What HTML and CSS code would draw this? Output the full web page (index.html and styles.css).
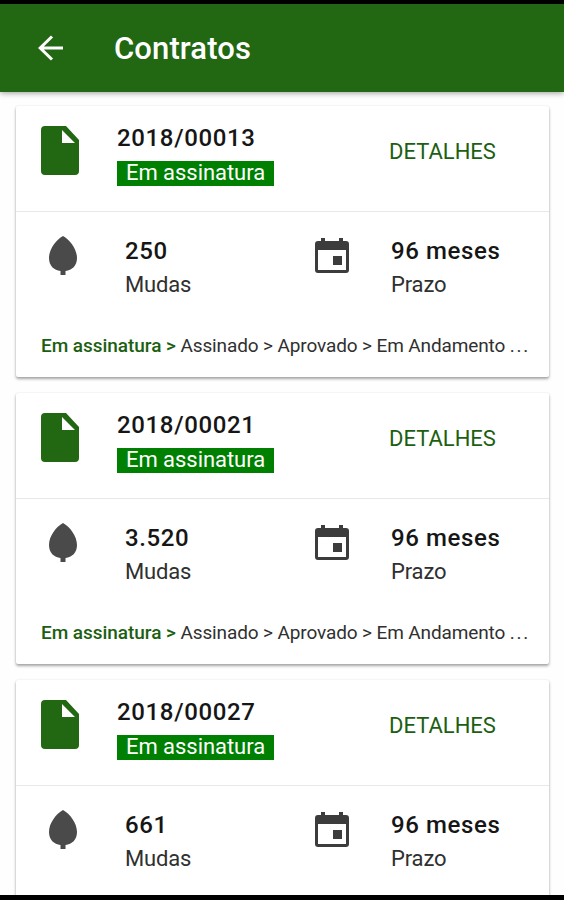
FILE: index.html
```html
<!DOCTYPE html>
<html lang="pt-BR">
<head>
    <meta charset="UTF-8">
    <meta name="viewport" content="width=device-width, initial-scale=1.0">
    <title>Contratos</title>
    <link rel="stylesheet" href="styles.css">
</head>
<body>
    <!-- Shared icons -->
    <svg class="icons">
        <symbol id="file" viewBox="0 0 38 49">
            <path d="M4 0H25L38 14V45Q38 49 34 49H4Q0 49 0 45V4Q0 0 4 0ZM21 4V17H34Z" fill-rule="evenodd"/>
        </symbol>
        <symbol id="leaf" viewBox="0 0 28 39">
            <path d="M14 0C7 4 0 13 0 22C0 30 5 34 11.5 35V39H16.5V35C23 34 28 30 28 22C28 13 21 4 14 0Z"/>
        </symbol>
        <symbol id="calendar" viewBox="0 0 34 35">
            <path d="M6 0H10V3H24V0H28V3H31Q34 3 34 6V32Q34 35 31 35H3Q0 35 0 32V6Q0 3 3 3H6ZM3 12V32H31V12ZM18 18H27V27H18Z" fill-rule="evenodd"/>
        </symbol>
    </svg>

    <header class="toolbar">
        <svg class="back" viewBox="0 0 26 26">
            <path d="M25 13H2M14 1.5L2.2 13L14 24.5"/>
        </svg>
        <h1>Contratos</h1>
    </header>

    <main class="list">
        <section class="card">
            <div class="card-head">
                <svg class="file"><use href="#file"/></svg>
                <div class="contract">
                    <h2>2018/00013</h2>
                    <span class="badge">Em assinatura</span>
                </div>
                <a class="details">DETALHES</a>
            </div>
            <div class="card-info">
                <svg class="leaf"><use href="#leaf"/></svg>
                <div class="value"><strong>250</strong><p>Mudas</p></div>
                <svg class="calendar"><use href="#calendar"/></svg>
                <div class="value"><strong>96 meses</strong><p>Prazo</p></div>
            </div>
            <p class="steps"><b>Em assinatura &gt;</b> Assinado &gt; Aprovado &gt; Em Andamento <span class="dots">...</span></p>
        </section>

        <section class="card">
            <div class="card-head">
                <svg class="file"><use href="#file"/></svg>
                <div class="contract">
                    <h2>2018/00021</h2>
                    <span class="badge">Em assinatura</span>
                </div>
                <a class="details">DETALHES</a>
            </div>
            <div class="card-info">
                <svg class="leaf"><use href="#leaf"/></svg>
                <div class="value"><strong>3.520</strong><p>Mudas</p></div>
                <svg class="calendar"><use href="#calendar"/></svg>
                <div class="value"><strong>96 meses</strong><p>Prazo</p></div>
            </div>
            <p class="steps"><b>Em assinatura &gt;</b> Assinado &gt; Aprovado &gt; Em Andamento <span class="dots">...</span></p>
        </section>

        <section class="card">
            <div class="card-head">
                <svg class="file"><use href="#file"/></svg>
                <div class="contract">
                    <h2>2018/00027</h2>
                    <span class="badge">Em assinatura</span>
                </div>
                <a class="details">DETALHES</a>
            </div>
            <div class="card-info">
                <svg class="leaf"><use href="#leaf"/></svg>
                <div class="value"><strong>661</strong><p>Mudas</p></div>
                <svg class="calendar"><use href="#calendar"/></svg>
                <div class="value"><strong>96 meses</strong><p>Prazo</p></div>
            </div>
        </section>
    </main>
</body>
</html>
```
FILE: styles.css
```css
* {
    box-sizing: border-box;
    margin: 0;
    padding: 0;
}
body {
    height: 900px;
    display: flex;
    flex-direction: column;
    overflow: hidden;
    border-top: 4px solid #000;
    border-bottom: 5px solid #000;
    background-color: #fefefe;
    color: #161616;
    font-family: Roboto, sans-serif;
}
.icons {
    display: none;
}
.toolbar {
    display: flex;
    flex: none;
    align-items: center;
    height: 88px;
    padding-left: 38px;
    background-color: #226711;
    box-shadow: 0 1px 6px rgba(0, 0, 0, 0.4);
    color: #fff;
}
.toolbar h1 {
    margin-left: 50px;
    padding-top: 1px;
    font-size: 31px;
    font-weight: 500;
    line-height: 36px;
    letter-spacing: 0.1px;
}
.back {
    width: 26px;
    height: 26px;
    fill: none;
    stroke: #fff;
    stroke-width: 3;
}
.list {
    flex: 1;
    min-height: 0;
    padding: 14px 15px 0 16px;
    overflow: hidden;
}
.card {
    height: 271px;
    margin-bottom: 16px;
    border-radius: 2px;
    background-color: #fff;
    box-shadow: 0 2px 3px rgba(0, 0, 0, 0.35), 0 0 2px rgba(0, 0, 0, 0.1);
}
.card-head {
    display: flex;
    height: 106px;
    padding-left: 25px;
    border-bottom: 1px solid #e8e8e8;
}
.file {
    flex: none;
    width: 38px;
    height: 49px;
    margin-top: 20px;
    fill: #226711;
}
.contract {
    flex: none;
    width: 310px;
    padding: 18px 0 0 38px;
}
.contract h2 {
    font-size: 24px;
    font-weight: 500;
    line-height: 28px;
    letter-spacing: 0.65px;
}
.badge {
    display: block;
    width: 157px;
    height: 25px;
    margin-top: 9px;
    padding-left: 9px;
    background-color: #008000;
    color: #fff;
    font-size: 22px;
    line-height: 23px;
    letter-spacing: -0.05px;
    white-space: nowrap;
}
.details {
    padding-top: 32px;
    color: #1c5f12;
    font-size: 22px;
    line-height: 28px;
}
.card-info {
    display: grid;
    grid-template-columns: 76px 190px 76px 1fr;
    height: 112px;
    padding: 24px 0 0 33px;
}
.leaf {
    width: 28px;
    height: 39px;
    fill: #4a4a4a;
}
.calendar {
    width: 34px;
    height: 35px;
    margin-top: 2px;
    fill: #3c3c3c;
}
.value strong {
    display: block;
    font-size: 24px;
    font-weight: 500;
    line-height: 30px;
    letter-spacing: 0.6px;
}
.value p {
    font-size: 22px;
    line-height: 30px;
    margin-top: 4px;
    color: #303030;
    letter-spacing: -0.15px;
}
.steps {
    padding: 9px 0 0 25px;
    font-size: 19px;
    line-height: 25px;
    color: #303030;
    letter-spacing: -0.12px;
    white-space: nowrap;
}
.steps b {
    color: #1c5f12;
    font-weight: 500;
    letter-spacing: -0.05px;
}
.dots {
    letter-spacing: 1.7px;
}
```
